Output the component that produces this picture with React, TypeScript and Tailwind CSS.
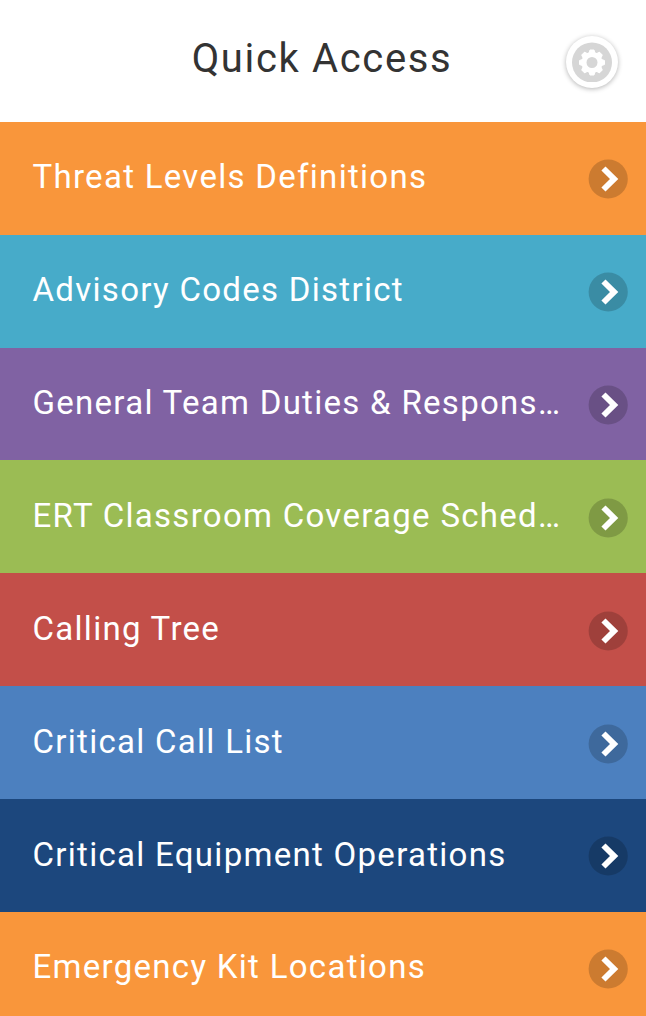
const items = [
  { title: "Threat Levels Definitions", color: "bg-[#f9963b]" },
  { title: "Advisory Codes District", color: "bg-[#47abc9]" },
  { title: "General Team Duties & Respons…", color: "bg-[#8062a3]" },
  { title: "ERT Classroom Coverage Sched…", color: "bg-[#9bbc54]" },
  { title: "Calling Tree", color: "bg-[#c34f49]" },
  { title: "Critical Call List", color: "bg-[#4c80bf]" },
  { title: "Critical Equipment Operations", color: "bg-[#1c477d]" },
  { title: "Emergency Kit Locations", color: "bg-[#f9963b]" },
];

function GearIcon() {
  return (
    <svg viewBox="0 0 40 40" className="h-10 w-10">
      <circle cx="20" cy="20.5" r="20" fill="#d6d6d6" />
      {[0, 45, 90, 135, 180, 225, 270, 315].map((angle) => (
        <path
          key={angle}
          d="M18 8h4l1.4 4h-6.8z"
          fill="#fff"
          stroke="#fff"
          strokeLinejoin="round"
          transform={`rotate(${angle} 20 20.5)`}
        />
      ))}
      <circle cx="20" cy="20.5" r="8" fill="none" stroke="#fff" strokeWidth="5" />
    </svg>
  );
}

function ChevronBadge() {
  return (
    <svg viewBox="0 0 40 40" className="h-10 w-10 shrink-0">
      <circle cx="20.2" cy="20" r="19.6" fill="#000" fillOpacity="0.18" />
      <path d="M17.5 7.4 30.3 20 17.5 32.6 13.4 28.6 22 20 13.4 11.4z" fill="#fff" />
    </svg>
  );
}

export default function App() {
  return (
    <div className="h-[1016px] w-[646px] overflow-hidden bg-white font-[Roboto,sans-serif]">
      <header className="relative flex h-[121.8px] items-center justify-center pr-0.5 pb-1">
        <h1 className="text-[40px] tracking-[1.65px] text-[#333]">Quick Access</h1>
        <button
          aria-label="Settings"
          className="absolute top-9 right-7 flex h-[52px] w-[52px] items-center justify-center rounded-full bg-white shadow-[0_1px_5px_rgba(0,0,0,0.3)]"
        >
          <GearIcon />
        </button>
      </header>
      <ul>
        {items.map((item) => (
          <li
            key={item.title}
            className={`flex h-[112.86px] items-center justify-between pt-[2px] pr-[18px] pl-[32.5px] text-white ${item.color}`}
          >
            <span className="pb-[4px] text-[33px] tracking-[1.29px] whitespace-nowrap">{item.title}</span>
            <ChevronBadge />
          </li>
        ))}
      </ul>
    </div>
  );
}
